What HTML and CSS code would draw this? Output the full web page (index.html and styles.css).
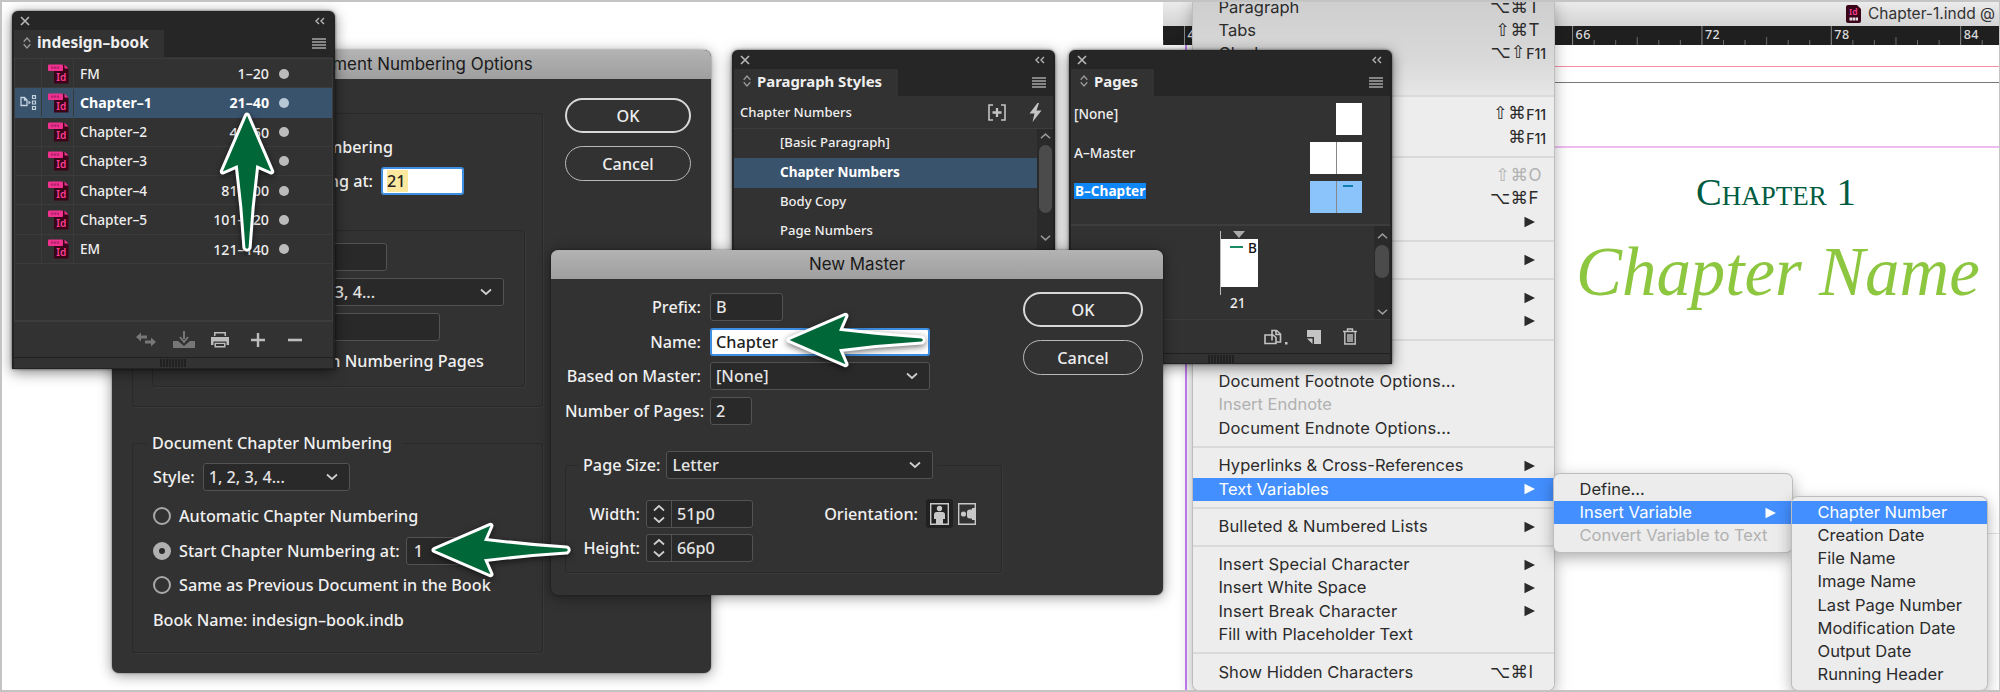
FILE: index.html
```html
<!DOCTYPE html>
<html lang="en">
<head>
<meta charset="utf-8">
<title>InDesign book chapters</title>
<link rel="stylesheet" href="styles.css">
</head>
<body>
<svg width="0" height="0" class="defs">
  <defs>
    <symbol id="arrow" viewBox="0 0 144 60">
      <path d="M5.500 30L61.500 5.800L55 20.700Q97 26 137.500 28.400Q140 30 137.500 31.600Q97 34 55 39.300L61.500 54.200Z" fill="#006838" stroke="#fff" stroke-width="6" stroke-linejoin="round" paint-order="stroke"/>
    </symbol>
    <symbol id="down" viewBox="0 0 12 8"><path d="M1 1.500L6 6L11 1.500" fill="none" stroke="currentColor" stroke-width="1.700"/></symbol>
    <symbol id="up" viewBox="0 0 12 8"><path d="M1 6.500L6 2L11 6.500" fill="none" stroke="currentColor" stroke-width="1.700"/></symbol>
    <symbol id="close" viewBox="0 0 10 10"><path d="M1 1L9 9M9 1L1 9" stroke="currentColor" stroke-width="1.700"/></symbol>
    <symbol id="collapse" viewBox="0 0 10 8"><path d="M4 1L1 4L4 7M9 1L6 4L9 7" fill="none" stroke="currentColor" stroke-width="1.400"/></symbol>
    <symbol id="updown" viewBox="0 0 8 12"><path d="M.7 4.700L4 1L7.300 4.700M.7 7.300L4 11L7.300 7.300" fill="none" stroke="currentColor" stroke-width="1.300"/></symbol>
    <symbol id="lines" viewBox="0 0 14 11"><path d="M0 1H14M0 4H14M0 7H14M0 10H14" stroke="currentColor" stroke-width="1.300"/></symbol>
    <symbol id="play" viewBox="0 0 12 12"><path d="M.5 .5L11.500 6L.5 11.500Z" fill="currentColor"/></symbol>
    <symbol id="grip" viewBox="0 0 26 8"><path d="M1 0V8M4 0V8M7 0V8M10 0V8M13 0V8M16 0V8M19 0V8M22 0V8M25 0V8" stroke="#191919" stroke-width="1.300"/></symbol>
    <symbol id="idfile" viewBox="0 0 21 20">
      <path d="M6 1H16.500L20.500 5V19.500H6Z" fill="#3a0519"/>
      <path d="M16.500 .5L20.500 4.500H16.500Z" fill="#f0318f"/>
      <rect x="0" y=".5" width="15" height="6.500" rx="1" fill="#f0318f"/>
      <path d="M3 3.700H11.500" stroke="#b3226c" stroke-width="2.300" stroke-dasharray="2.300 .6"/>
      <text x="8.300" y="17" class="id-text" font-size="10">Id</text>
    </symbol>
  </defs>
</svg>
<main class="stage">

  <section class="doc">
    <header class="doc-title">
      <svg width="15" height="18" viewBox="0 0 15 18"><path d="M2 0H11L15 4V16Q15 18 13 18H2Q0 18 0 16V2Q0 0 2 0Z" fill="#3a0519"/><text x="3" y="9.500" class="id-text" font-size="8.500">Id</text><path d="M3.500 14H12" stroke="#e8dfe3" stroke-width="3" stroke-dasharray="2.500 .5"/></svg>
      <span>Chapter-1.indd @</span>
    </header>
    <div class="ruler" id="ruler"></div>
    <div class="page">
      <div class="line bleed"></div><div class="line edge"></div><div class="line margin"></div>
      <div class="vline"></div><div class="line seam"></div>
      <div class="ch-num">Chapter 1</div>
      <div class="ch-name">Chapter Name</div>
    </div>
  </section>

  <nav class="menu main-menu">
    <div class="item"><span>Paragraph</span><kbd>⌥⌘<b>T</b></kbd></div>
    <div class="item"><span>Tabs</span><kbd>⇧⌘<b>T</b></kbd></div>
    <div class="item fn"><span>Glyphs</span><kbd>⌥⇧<small>F11</small></kbd></div>
    <div class="item"><span>Story</span></div>
    <hr>
    <div class="item fn"><span></span><kbd>⇧⌘<small>F11</small></kbd></div>
    <div class="item fn"><span></span><kbd>⌘<small>F11</small></kbd></div>
    <hr>
    <div class="item off"><span></span><kbd>⇧⌘<b>O</b></kbd></div>
    <div class="item"><span></span><kbd>⌥⌘<b>F</b></kbd></div>
    <div class="item"><span></span><svg class="sub"><use href="#play"/></svg></div>
    <hr>
    <div class="item"><span></span><svg class="sub"><use href="#play"/></svg></div>
    <hr>
    <div class="item"><span></span><svg class="sub"><use href="#play"/></svg></div>
    <div class="item"><span></span><svg class="sub"><use href="#play"/></svg></div>
    <hr>
    <div class="item"><span></span></div>
    <div class="item"><span class="wide">Document Footnote Options...</span></div>
    <div class="item off"><span>Insert Endnote</span></div>
    <div class="item"><span class="wide">Document Endnote Options...</span></div>
    <hr>
    <div class="item"><span>Hyperlinks &amp; Cross-References</span><svg class="sub"><use href="#play"/></svg></div>
    <div class="item on"><span>Text Variables</span><svg class="sub"><use href="#play"/></svg></div>
    <hr>
    <div class="item"><span class="wide">Bulleted &amp; Numbered Lists</span><svg class="sub"><use href="#play"/></svg></div>
    <hr>
    <div class="item"><span class="wide">Insert Special Character</span><svg class="sub"><use href="#play"/></svg></div>
    <div class="item"><span>Insert White Space</span><svg class="sub"><use href="#play"/></svg></div>
    <div class="item"><span class="wide">Insert Break Character</span><svg class="sub"><use href="#play"/></svg></div>
    <div class="item"><span>Fill with Placeholder Text</span></div>
    <hr>
    <div class="item"><span>Show Hidden Characters</span><kbd>⌥⌘<b>I</b></kbd></div>
  </nav>
  <nav class="menu sub-one">
    <div class="item"><span>Define...</span></div>
    <div class="item on"><span>Insert Variable</span><svg class="sub"><use href="#play"/></svg></div>
    <div class="item off"><span>Convert Variable to Text</span></div>
  </nav>
  <nav class="menu sub-two">
    <div class="item on"><span>Chapter Number</span></div>
    <div class="item"><span>Creation Date</span></div>
    <div class="item"><span>File Name</span></div>
    <div class="item"><span>Image Name</span></div>
    <div class="item"><span>Last Page Number</span></div>
    <div class="item"><span>Modification Date</span></div>
    <div class="item"><span>Output Date</span></div>
    <div class="item"><span>Running Header</span></div>
  </nav>

  <section class="dialog numbering">
    <header class="titlebar">Document Numbering Options</header>
    <div class="dialog-body">
      <div class="groups">
        <div class="group g-page">
          <div class="row r1"><i class="radio"></i>Automatic Page Numbering</div>
          <div class="row r2">Start Page Numbering at:<span class="field focus w82"><mark>21</mark></span></div>
          <div class="group inner">
            <div class="row in1"><span class="field"></span></div>
            <div class="row in2"><span class="field select">1, 2, 3, 4...<svg class="chev"><use href="#down"/></svg></span></div>
            <div class="row in3"><span class="field"></span></div>
            <div class="row in4">Include Prefix when Numbering Pages</div>
          </div>
        </div>
        <div class="group g-chapter">
          <div class="legend"><span>Document Chapter Numbering</span></div>
          <div class="row style-row">Style:<span class="field select">1, 2, 3, 4...<svg class="chev"><use href="#down"/></svg></span></div>
          <div class="row opt"><i class="radio"></i>Automatic Chapter Numbering</div>
          <div class="row opt"><i class="radio checked"></i>Start Chapter Numbering at:<span class="field start">1</span></div>
          <div class="row opt"><i class="radio"></i>Same as Previous Document in the Book</div>
          <div class="row opt book-name">Book Name: indesign–book.indb</div>
        </div>
      </div>
      <div class="buttons"><button class="primary">OK</button><button>Cancel</button></div>
    </div>
  </section>

  <section class="panel book">
    <header class="strip"><svg class="i-close"><use href="#close"/></svg><svg class="i-coll"><use href="#collapse"/></svg></header>
    <div class="tabs"><div class="tab"><svg class="i-ud"><use href="#updown"/></svg>indesign–book</div><svg class="i-lines"><use href="#lines"/></svg></div>
    <div class="book-list">
      <div class="brow"><i></i><svg class="idf"><use href="#idfile"/></svg><span>FM</span><em>1–20</em><u></u></div>
      <div class="brow sel"><i><svg width="17" height="15" viewBox="0 0 17 15"><path d="M1 2.500H4.500L7 5V10.500H1ZM4.500 2.500V5H7" fill="none" stroke="#c3d2df" stroke-width="1.300"/><path d="M8.500 5.500L11 7.500L8.500 9.500Z" fill="#c3d2df"/><path d="M12.500 .7H15.500V3.500H12.500ZM12.500 6H15.500V9H12.500ZM12.500 11.500H15.500V14.300H12.500Z" fill="none" stroke="#c3d2df" stroke-width="1.200"/></svg></i><svg class="idf"><use href="#idfile"/></svg><span>Chapter–1</span><em>21–40</em><u></u></div>
      <div class="brow"><i></i><svg class="idf"><use href="#idfile"/></svg><span>Chapter–2</span><em>41–60</em><u></u></div>
      <div class="brow"><i></i><svg class="idf"><use href="#idfile"/></svg><span>Chapter–3</span><em>61–80</em><u></u></div>
      <div class="brow"><i></i><svg class="idf"><use href="#idfile"/></svg><span>Chapter–4</span><em>81–100</em><u></u></div>
      <div class="brow"><i></i><svg class="idf"><use href="#idfile"/></svg><span>Chapter–5</span><em>101–120</em><u></u></div>
      <div class="brow"><i></i><svg class="idf"><use href="#idfile"/></svg><span>EM</span><em>121–140</em><u></u></div>
    </div>
    <footer class="tools">
      <svg width="20" height="16" viewBox="0 0 20 16"><path d="M0 5L5 .5V3.500H11V6.500H5V9.500ZM20 10L15 5.500V8.500H9V11.500H15V14.500Z" fill="#777"/></svg>
      <svg width="22" height="18" viewBox="0 0 22 18"><path d="M0 10H5L11 15L17 10H22V17H0Z" fill="#777"/><path d="M11 0V8M7 6L11 11L15 6" fill="none" stroke="#777" stroke-width="2"/></svg>
      <svg width="18" height="16" viewBox="0 0 18 16"><path d="M3 0H15V4H3ZM0 5H18V13H15.500V9.500H2.500V13H0ZM3.500 10.800H14.500V15.500H3.500Z" fill="#bdbdbd"/><path d="M4.500 1.500H13.500V4H4.500ZM5 12H13V14H5Z" fill="#323232"/></svg>
      <svg width="14" height="14" viewBox="0 0 14 14"><path d="M7 0V14M0 7H14" stroke="#bdbdbd" stroke-width="2.400"/></svg>
      <svg width="14" height="14" viewBox="0 0 14 14"><path d="M0 7H14" stroke="#bdbdbd" stroke-width="2.600"/></svg>
    </footer>
    <div class="gripbar"><svg width="26" height="8"><use href="#grip"/></svg></div>
  </section>

  <section class="panel styles">
    <header class="strip"><svg class="i-close"><use href="#close"/></svg><svg class="i-coll"><use href="#collapse"/></svg></header>
    <div class="tabs"><div class="tab"><svg class="i-ud"><use href="#updown"/></svg>Paragraph Styles</div><svg class="i-lines"><use href="#lines"/></svg></div>
    <div class="current"><span>Chapter Numbers</span>
      <svg width="18" height="17" viewBox="0 0 18 17"><path d="M5 1H1V16H5M13 1H17V16H13" fill="none" stroke="#c4c4c4" stroke-width="1.600"/><path d="M9 4V13M4.500 8.500H13.500" stroke="#c4c4c4" stroke-width="2.300"/></svg>
      <svg width="13" height="19" viewBox="0 0 13 19"><path d="M8.500 0L.5 10.500H5.500L3.500 19L12.500 7.500H7.500L10 0Z" fill="#c4c4c4"/></svg>
    </div>
    <div class="style-area">
      <div class="style-list"><div>[Basic Paragraph]</div><div class="sel">Chapter Numbers</div><div>Body Copy</div><div>Page Numbers</div></div>
      <div class="scroll"><svg class="chev"><use href="#up"/></svg><i></i><svg class="chev"><use href="#down"/></svg></div>
    </div>
  </section>

  <section class="panel pages">
    <header class="strip"><svg class="i-close"><use href="#close"/></svg><svg class="i-coll"><use href="#collapse"/></svg></header>
    <div class="tabs"><div class="tab"><svg class="i-ud"><use href="#updown"/></svg>Pages</div><svg class="i-lines"><use href="#lines"/></svg></div>
    <div class="masters">
      <div class="master"><span>[None]</span><i class="thumb"></i></div>
      <div class="master"><span>A–Master</span><i class="thumb"></i><i class="thumb second"></i></div>
      <div class="master chosen"><span><mark>B–Chapter</mark></span><i class="thumb"></i><i class="thumb second"><b></b></i></div>
    </div>
    <div class="spreads">
      <div class="spread">
        <svg width="12" height="7" viewBox="0 0 12 7"><path d="M0 0H12L6 7Z" fill="#aaa"/></svg>
        <div class="leaf"><i></i><span>B</span></div>
        <div class="num">21</div>
      </div>
      <div class="scroll"><svg class="chev"><use href="#up"/></svg><i></i><svg class="chev"><use href="#down"/></svg></div>
    </div>
    <footer class="tools">
      <svg width="24" height="16" viewBox="0 0 24 16"><path d="M7 6H1V14.500H12V11M8 11.500V1.500H12.500L16.500 5V13H12V8.500L9 6H7M12 1.500V5.500H16.500" fill="none" stroke="#c4c4c4" stroke-width="1.600"/><rect x="21" y="13" width="2.500" height="2.500" fill="#c4c4c4"/></svg>
      <svg width="14" height="14" viewBox="0 0 14 14"><path d="M0 0H14V14H7V7H0Z" fill="#c4c4c4"/><path d="M0 8.500H5.500V14Z" fill="#c4c4c4"/></svg>
      <svg width="14" height="17" viewBox="0 0 14 17"><path d="M0 3.500H14M4.500 3V1H9.500V3M1.800 4V16H12.200V4M5 6V14M7 6V14M9 6V14" fill="none" stroke="#c4c4c4" stroke-width="1.400"/></svg>
    </footer>
    <div class="gripbar"><svg width="26" height="8"><use href="#grip"/></svg></div>
  </section>

  <section class="dialog master-dialog">
    <header class="titlebar">New Master</header>
    <div class="dialog-body">
      <div class="form">
        <div class="frow"><label>Prefix:</label><span class="field w73">B</span></div>
        <div class="frow"><label>Name:</label><span class="field focus w219">Chapter</span></div>
        <div class="frow"><label>Based on Master:</label><span class="field select w219">[None]<svg class="chev"><use href="#down"/></svg></span></div>
        <div class="frow"><label>Number of Pages:</label><span class="field w42">2</span></div>
        <div class="group size-group">
          <div class="legend size-legend"><span>Page Size:<span class="field select">Letter<svg class="chev"><use href="#down"/></svg></span></span></div>
          <div class="size-grid">
            <div class="dims">
              <div class="frow"><label>Width:</label><span class="field spin"><i><svg class="chev"><use href="#up"/></svg><svg class="chev"><use href="#down"/></svg></i>51p0</span></div>
              <div class="frow"><label>Height:</label><span class="field spin"><i><svg class="chev"><use href="#up"/></svg><svg class="chev"><use href="#down"/></svg></i>66p0</span></div>
            </div>
            <div class="orient"><label>Orientation:</label>
              <span class="pressed"><svg width="19" height="22" viewBox="0 0 19 22"><path d="M.7 .7H18.300V21.300H.7Z" fill="none" stroke="#c8c8c8" stroke-width="1.400"/><circle cx="9.500" cy="5.500" r="2.700" fill="#c8c8c8"/><path d="M6.500 9H12.500Q15 9 15 12V16H13V21H6V16H4V12Q4 9 6.500 9Z" fill="#c8c8c8"/></svg></span>
              <svg width="18" height="22" viewBox="0 0 18 22"><path d="M17.300 6V.7H.7V21.300H17.300V16" fill="none" stroke="#c8c8c8" stroke-width="1.400"/><circle cx="5.500" cy="11" r="2.600" fill="#c8c8c8"/><path d="M18 5H14V6.500H12Q9 6.500 9 9V13Q9 15.500 12 15.500H14V17H18Z" fill="#c8c8c8"/></svg>
            </div>
          </div>
        </div>
      </div>
      <div class="buttons"><button class="primary">OK</button><button>Cancel</button></div>
    </div>
  </section>

  <svg class="arrow a-book" viewBox="0 0 60 144"><use href="#arrow" width="144" height="60" transform="translate(60 0) rotate(90)"/></svg>
  <svg class="arrow a-start"><use href="#arrow"/></svg>
  <svg class="arrow a-name"><use href="#arrow"/></svg>
</main>
<script src="ruler.js"></script>
</body>
</html>
```
FILE: ruler.js
```javascript
// Ruler ticks: one per pica, numbered every six.
const ruler = document.getElementById('ruler');
const unit = 21.56, start = 48, origin = 21.5;
let out = '<svg width="837" height="19">';
for (let n = 47; n < 87; n++) {
  const x = origin + (n - start) * unit, r = n % 6;
  const top = r === 0 ? 0 : r === 3 ? 11 : 14;
  out += `<path d="M${x} ${top}V19" stroke="${r === 0 ? '#8a8a8a' : '#6a6a6a'}"/>`;
  if (r === 0) out += `<text x="${x + 3}" y="12.500">${n}</text>`;
}
ruler.innerHTML = out + '</svg>';
```
FILE: styles.css
```css
*{box-sizing:border-box}
body{margin:0;background:#fff}
.defs{position:absolute}
.stage{position:relative;width:2000px;height:692px;overflow:hidden;background:#fff;border:1px solid #c4c4c4;border-width:2px 1px 2px 2px;font-family:"Noto Sans",sans-serif}
.stage>*{position:absolute}
.id-text{font-family:"Noto Sans",sans-serif;font-weight:600;fill:#ff3d92}
svg{display:block;flex:none}
mark{color:inherit;background:none}

/* document window */
.doc{left:1161px;top:0;width:837px;height:688px}
.doc-title{height:24px;background:linear-gradient(#ebebeb,#d3d3d3);display:flex;align-items:center;padding-left:683px;gap:7px;font:15.5px/24px Inter,sans-serif;color:#333;white-space:nowrap}
.ruler{height:19px;background:#1f1f1f}
.ruler text{font:500 12.5px "Noto Sans",sans-serif;fill:#ddd;letter-spacing:.5px}
.page{position:relative;height:645px}
.line{position:absolute;left:0;right:0;height:1px}
.bleed{top:21px;background:#f58ca2}
.edge{top:37px;background:#777}
.margin{top:101px;height:2px;background:#eebdf0}
.seam{top:488px;left:800px;background:#e2e2e2}
.vline{position:absolute;left:22px;top:0;bottom:0;width:1.5px;background:#c97ef8}
.ch-num{padding:122px 0 0 533px;font:small-caps 38.6px/50px "Liberation Serif",serif;color:#005c41;white-space:nowrap}
.ch-name{padding:15px 0 0 413px;font:italic 68.9px/80px "Liberation Serif",serif;color:#8dc63f;white-space:nowrap}

/* menus */
.menu{background:#ececec;border-radius:6px;box-shadow:0 0 0 1px #bdbdbd,0 5px 16px rgba(0,0,0,.35);font:16.55px/23.17px Inter,sans-serif;color:#2b2b2b;overflow:hidden}
.main-menu{left:1191px;top:-2px;width:361px;height:690px;border-radius:0 0 6px 6px;background:linear-gradient(#cecece,#d9d9d9 60px,#e6e6e6 95px,#ededed 97px)}
.main-menu .item:first-child{margin-top:-4px}
.sub-one{left:1552px;top:472px;width:238px;height:78px;padding-top:4px}
.sub-two{left:1790px;top:495px;width:195px;height:193px;padding-top:4px}
.item{height:23.17px;padding:0 19px 0 25.5px;display:flex;align-items:center;white-space:nowrap}
.item span{flex:1}
.item .wide{letter-spacing:.13px}
.sub-one .item{padding-right:16px}
.item.on{background:#438fff;color:#fff}
.item.off{color:#b1b1b1}
.item kbd{font:17.5px/23px "DejaVu Sans",sans-serif;display:flex;letter-spacing:.4px;margin-right:-7px}
.item kbd b{font:17px/23px Inter,sans-serif;width:13.5px;letter-spacing:0}
.item kbd small{font:500 14px/25px Inter,sans-serif;letter-spacing:0}
.item.fn kbd{margin-right:-11px}
.sub{width:11.5px;height:12px;color:#2b2b2b}
.on .sub{color:#fff}
.menu hr{border:0;margin:6.33px 0;height:2px;background:#dadada}

/* dialogs */
.dialog{background:#323232;border-radius:7px;color:#f0f0f0;font-size:16.2px;font-weight:500;box-shadow:0 0 2px rgba(0,0,0,.5),0 2px 14px rgba(0,0,0,.42)}
.titlebar{height:29px;background:linear-gradient(#b3b3b3,#9f9f9f);border-radius:7px 7px 0 0;color:#191919;text-align:center;font:16.9px/28px Inter,sans-serif}
.dialog-body{display:flex;align-items:flex-start}
.group{border:1px solid #292929;box-shadow:1px 1px 0 #393939;border-radius:3px}
.row,.frow{display:flex;align-items:center;white-space:nowrap}
.field{height:28px;border:1px solid #535353;border-radius:3px;background:#292929;display:flex;align-items:center;padding:0 5px;color:#e4e4e4}
.field.focus{background:#fff;color:#222;border:2px solid #3e8ee2;padding:0 4px}
.select{justify-content:space-between}
.chev{width:12px;height:8px;color:#d0d0d0}
.buttons{display:flex;flex-direction:column}
.buttons button{font:500 16.2px "Noto Sans",sans-serif;color:#eee;background:none;border:1.500px solid #b8b8b8;border-radius:18px;height:35px;padding:0}
.buttons .primary{border:2.500px solid #d8d8d8}

.numbering{left:110px;top:48px;width:599px;height:623px}
.numbering .groups{width:411px;margin:34px 0 0 20px}
.numbering .buttons{margin:19px 0 0 22px;gap:13px;width:126px}
.g-page{height:294px}
.r1{height:28px;margin-top:19px;padding-left:49px;gap:8px;width:260px;justify-content:flex-end}
.r2{height:28px;margin-top:6px;width:331px;justify-content:flex-end;gap:8px}
.w82{width:83px}
.w82 mark{background:#fbe89e;padding:0 2px 0 0}
.inner{margin:35px 0 0 19px;width:373px;height:157px}
.inner .row{justify-content:flex-end}
.in1{margin:12px 137px 0 0;height:28px}
.in1 .field{width:110px}
.in2{margin:7px 20px 0 0}
.in2 .field{width:211px}
.in3{margin:7px 84px 0 0}
.in3 .field{width:147px}
.in4{margin:6px 40px 0 0;height:28px}
.g-chapter{height:210px;margin-top:36px;padding-left:20px}
.legend{height:24px;line-height:24px;margin-top:-13px;display:flex;margin-left:-6px}
.legend>span{background:#323232;padding:0 11px 0 5px}
.style-row{gap:8px;margin:8px 0 8px}
.style-row .field{width:147px}
.field.select{padding-right:11px}
.opt{height:34.6px}
.book-name{font-size:16.2px}
.radio{width:18px;height:18px;border:2px solid #a8a8a8;border-radius:50%;margin-right:8px;flex:none}
.radio.checked{border:6px solid #b0b0b0;background:#2a2a2a}
.start{width:55px;margin-left:6px;padding-left:7px}

.master-dialog{left:549px;top:248px;width:612px;height:345px}
.form{width:440px;margin:11px 0 0 14px}
.frow{height:34.6px}
.form>.frow label{width:136px;text-align:right;margin-right:9px}
.w73{width:73px}.w42{width:42px}.w219{width:220px}
.master-dialog .buttons{width:120px;margin:13px 0 0 18px;gap:13px}
.size-group{margin-top:37px;width:437px;height:108px}
.size-legend{height:28px;margin:-15px 0 0 13px}
.size-legend>span{display:flex;align-items:center;gap:6px;padding:0 4px}
.size-legend .field{width:267px}
.size-grid{display:flex;justify-content:space-between;margin-top:17px}
.dims label{width:74px;text-align:right;margin-right:6px}
.spin{width:107px;padding:0}
.spin i{width:25px;height:26px;border-right:1px solid #535353;display:flex;flex-direction:column;align-items:center;justify-content:center;gap:4px;margin-right:5px}
.orient{display:flex;align-items:center;height:35px;margin-right:25px}
.pressed{width:27px;height:29px;background:#212121;border-radius:3px;display:flex;align-items:center;justify-content:center;margin:0 5px 0 8px}

/* panels */
.panel{background:#323232;border:1px solid #232323;border-width:1px 2px 1px 2px;border-radius:6px 6px 0 0;color:#efefef;font-size:14px;font-weight:500;box-shadow:0 0 3px rgba(0,0,0,.6),0 3px 14px rgba(0,0,0,.5)}
.strip{height:18px;background:#262626;display:flex;justify-content:space-between;align-items:center;padding:0 8px 0 6px;border-radius:5px 5px 0 0;color:#b5b5b5}
.i-close{width:10px;height:10px}
.i-coll{width:10px;height:8px}
.i-ud{width:8px;height:12px;color:#999}
.i-lines{width:14px;height:11px;color:#a5a5a5}
.tabs{height:27px;background:#262626;display:flex;justify-content:space-between;align-items:center;padding-right:7px;white-space:nowrap}
.tab{height:27px;background:#323232;display:flex;align-items:center;gap:6px;padding:0 14px 2px 9px;font-size:15.4px;font-weight:700}
.book{left:10px;top:9px;width:323px;height:358px}
.book .tab{width:150px}
.book .tabs{margin-bottom:1px}
.book-list{height:264px;border:1px solid #3c3c3c;border-width:1px 1px 2px}
.brow{height:29.3px;display:grid;grid-template-columns:27px 31px 1fr 90px 63px;align-items:center;border-bottom:1px solid #3b3b3b}
.brow>i{height:29px;border-right:1px solid #3b3b3b;display:flex;align-items:center;justify-content:center}
.brow .idf{width:21px;height:20px;margin-left:6px}
.brow span{height:28px;line-height:27px;padding-left:6px;border-left:1px solid #3b3b3b;font-size:13.7px}
.brow em{font-style:normal;text-align:right;line-height:27px;font-size:14.2px}
.brow.sel span,.brow.sel em{font-size:14.2px}
.brow u{width:10px;height:10px;border-radius:50%;background:#bbb;margin-left:10px}
.brow.sel{background:#39536d;font-weight:700;color:#fff;border-color:#39536d}
.brow.sel u{background:#b9c8d6}
.tools{display:flex;align-items:center}
.book .tools{height:35px;gap:17px;padding-left:122px}
.book .tools svg:nth-child(3){margin-left:-1px}
.book .tools svg:nth-child(4){margin-left:5px}
.book .tools svg:nth-child(5){margin-left:6px}
.gripbar{height:10px;border-top:1px solid #202020;display:flex;justify-content:center;align-items:center;padding-right:2px}
.styles{left:730px;top:48px;width:323px;height:205px;font-size:13.1px}
.styles .tab{width:164px;font-size:14.9px;padding-bottom:3px}
.current{height:32px;display:flex;align-items:center;padding:0 11px 0 6px}
.current span{flex:1}
.current svg:nth-child(2){margin-right:23px}
.style-area{display:flex;border-top:1px solid #3d3d3d;height:124px}
.style-list{flex:1}
.style-list div{height:29.4px;line-height:27px;padding-left:46px}
.style-list .sel{background:#39536d;font-weight:700;font-size:13.5px;line-height:28px;color:#fff}
.scroll{width:16px;background:#2a2a2a;display:flex;flex-direction:column;align-items:center}
.scroll i{width:13px;border-radius:7px;background:#4b4b4b}
.scroll .chev{width:11px;color:#999}
.styles .scroll{padding-top:3px}
.styles .scroll i{height:68px;margin:5px 0 21px}
.pages{left:1067px;top:48px;width:323px;height:314px;font-size:13.6px}
.pages .tab{width:83px;font-size:14.9px;padding-bottom:3px}
.masters{height:130px;padding:0 28px 0 3px;border-bottom:2px solid #3d3d3d}
.master{height:38.7px;display:flex;align-items:center;padding-top:3px}
.master span{flex:1;margin-top:-7px}
.thumb{width:26px;height:32px;background:#fff;margin-top:5px}
.thumb.second{border-left:1px solid #888}
.chosen .thumb{background:#8ac4fb}
.thumb b{display:block;width:10px;height:2px;background:#0e7fb5;margin:4px 0 0 6px}
.chosen mark{background:#0f86f5;color:#fff;font-weight:700;font-size:13.6px;padding:0 1px;line-height:16px;display:inline-block}
.spreads{display:flex;justify-content:space-between;height:94px;border-bottom:1px solid #3a3a3a}
.spread{margin:5px 0 0 149px;width:40px;border-left:1px solid #bbb;height:64px}
.spread svg{margin-left:12px}
.leaf{width:37px;height:48px;background:#fff;margin-top:1px;display:flex;justify-content:flex-end;color:#111;line-height:17px;padding-right:1px}
.leaf i{width:13px;height:2px;background:#188a66;margin:7px 5px 0 0}
.num{padding:6px 0 0 9px;line-height:20px}
.pages .scroll{padding-top:6px}
.pages .scroll i{width:14px;height:33px;margin:5px 0 30px}
.pages .tools{height:33px;padding-left:193px}
.pages .tools svg+svg{margin-left:19px}
.pages .tools svg:last-child{margin-left:22px}
.pages .gripbar{padding:0 20px 0 0}

/* pointer arrows */
.arrow{width:144px;height:60px;filter:drop-shadow(0 2px 3px rgba(0,0,0,.55));overflow:visible}
.a-book{left:215px;top:108px;width:60px;height:144px}
.a-start{left:427px;top:518px}
.a-name{left:782px;top:308px}
```
